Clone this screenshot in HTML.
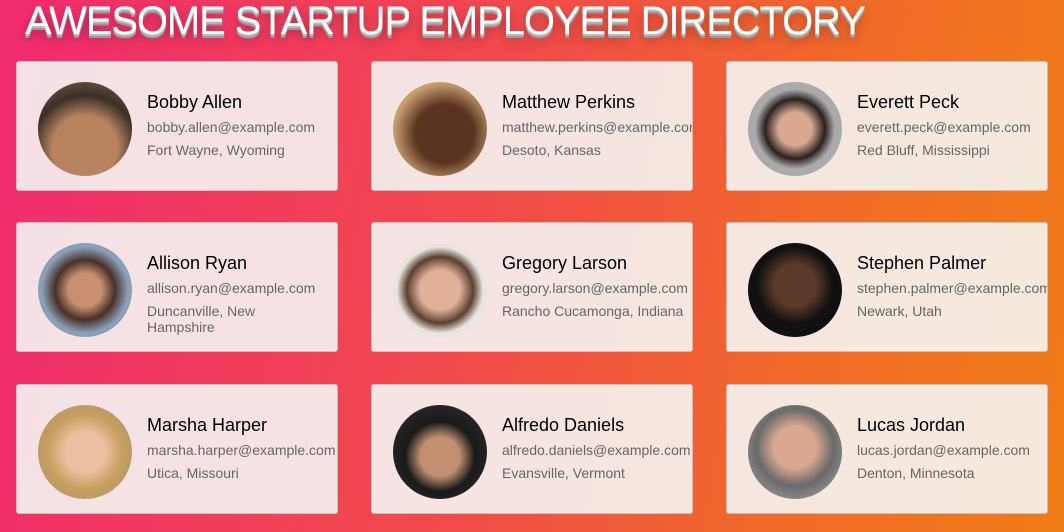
<!DOCTYPE html>
<html><head><meta charset="utf-8"><style>
*{margin:0;padding:0;box-sizing:border-box}
body{width:1064px;height:532px;overflow:hidden;background:linear-gradient(100deg,#f02b70 0%,#f14a4c 45%,#f06a28 75%,#f07d17 100%);font-family:"Liberation Sans",sans-serif;position:relative}
h1{position:absolute;left:25px;top:1px;font-size:40px;line-height:40px;color:#fff;font-weight:normal;letter-spacing:-1.1px;text-shadow:0 2px 0 #bbb,0 4px 0 #999,0 6px 10px rgba(0,0,0,.35);white-space:nowrap}
.card{position:absolute;width:322px;height:130px;background:rgba(245,245,243,.9);border:1px solid #c9c0c0;border-radius:3px;overflow:hidden}
.av{position:absolute;left:21px;top:20px;width:94px;height:94px;border-radius:50%}
.n{position:absolute;left:130px;top:30px;font-size:18px;color:#000;white-space:nowrap}
.e{position:absolute;left:130px;top:57px;font-size:14px;color:#666;white-space:nowrap}
.l{position:absolute;left:130px;top:80px;font-size:14px;color:#666;line-height:16px;white-space:nowrap}
</style></head><body>
<h1>AWESOME STARTUP EMPLOYEE DIRECTORY</h1>
<div class="card" style="left:16px;top:61px"><div class="av" style="background:radial-gradient(circle at 50% 70%,#b88260 0 40%,#3a2e28 65%,#8a6a50)"></div><div class="n">Bobby Allen</div><div class="e">bobby.allen@example.com</div><div class="l">Fort Wayne, Wyoming</div></div>
<div class="card" style="left:371px;top:61px"><div class="av" style="background:radial-gradient(circle at 55% 55%,#5a3420 0 40%,#c9a070 70%,#7a6040)"></div><div class="n">Matthew Perkins</div><div class="e">matthew.perkins@example.com</div><div class="l">Desoto, Kansas</div></div>
<div class="card" style="left:726px;top:61px"><div class="av" style="background:radial-gradient(circle at 50% 50%,#d8a890 0 25%,#2a2220 45%,#aaa 60%)"></div><div class="n">Everett Peck</div><div class="e">everett.peck@example.com</div><div class="l">Red Bluff, Mississippi</div></div>
<div class="card" style="left:16px;top:222px"><div class="av" style="background:radial-gradient(circle at 50% 50%,#c89070 0 25%,#4a3028 45%,#8aa0b8 65%)"></div><div class="n">Allison Ryan</div><div class="e">allison.ryan@example.com</div><div class="l">Duncanville, New<br>Hampshire</div></div>
<div class="card" style="left:371px;top:222px"><div class="av" style="background:radial-gradient(circle at 50% 50%,#e0b098 0 30%,#5a4030 50%,#e8e4e0 65%)"></div><div class="n">Gregory Larson</div><div class="e">gregory.larson@example.com</div><div class="l">Rancho Cucamonga, Indiana</div></div>
<div class="card" style="left:726px;top:222px"><div class="av" style="background:radial-gradient(circle at 50% 45%,#5a3a28 0 30%,#101010 55%),#111"></div><div class="n">Stephen Palmer</div><div class="e">stephen.palmer@example.com</div><div class="l">Newark, Utah</div></div>
<div class="card" style="left:16px;top:384px"><div class="av" style="background:radial-gradient(circle at 50% 50%,#ecc0a0 0 30%,#c8a060 55%,#a89070)"></div><div class="n">Marsha Harper</div><div class="e">marsha.harper@example.com</div><div class="l">Utica, Missouri</div></div>
<div class="card" style="left:371px;top:384px"><div class="av" style="background:radial-gradient(circle at 50% 55%,#c09070 0 28%,#1a1a1a 50%,#333)"></div><div class="n">Alfredo Daniels</div><div class="e">alfredo.daniels@example.com</div><div class="l">Evansville, Vermont</div></div>
<div class="card" style="left:726px;top:384px"><div class="av" style="background:radial-gradient(circle at 50% 45%,#d8a890 0 30%,#6a6a6a 55%,#b0b0b0)"></div><div class="n">Lucas Jordan</div><div class="e">lucas.jordan@example.com</div><div class="l">Denton, Minnesota</div></div>
</body></html>
